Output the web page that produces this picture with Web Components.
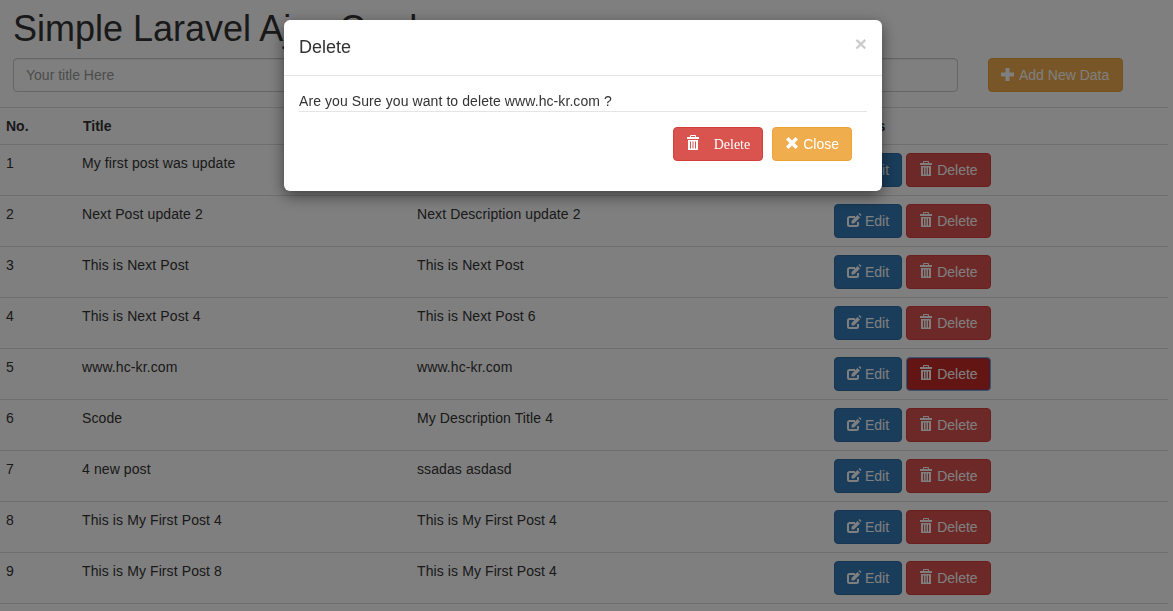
<!DOCTYPE html>
<html lang="en">
<head>
<meta charset="utf-8">
<title>Simple Laravel Ajax Crud</title>
<style>
html,body{margin:0;padding:0;background:#fff;color:#333;font:14px/20px "Liberation Sans",Arial,sans-serif;overflow:hidden;height:611px}
</style>
</head>
<body>
<x-page>
  <x-head slot="head" heading="Simple Laravel Ajax Crud"></x-head>
  <x-table>
    <x-row head no="No." name="Title" desc="Description" act="Actions"></x-row>
    <x-row no="1" name="My first post was update"></x-row>
    <x-row no="2" name="Next Post update 2" desc="Next Description update 2"></x-row>
    <x-row no="3" name="This is Next Post" desc="This is Next Post"></x-row>
    <x-row no="4" name="This is Next Post 4" desc="This is Next Post 6"></x-row>
    <x-row no="5" name="www.hc-kr.com" desc="www.hc-kr.com" focused></x-row>
    <x-row no="6" name="Scode" desc="My Description Title 4"></x-row>
    <x-row no="7" name="4 new post" desc="ssadas asdasd"></x-row>
    <x-row no="8" name="This is My First Post 4" desc="This is My First Post 4"></x-row>
    <x-row no="9" name="This is My First Post 8" desc="This is My First Post 4"></x-row>
  </x-table>
</x-page>
<x-modal heading="Delete">
  Are you Sure you want to delete www.hc-kr.com ?
</x-modal>
<script>
const ICONS = {
  trash: '<path fill-rule="evenodd" d="M5-1h4a1 1 0 0 1 1 1v1h3v2H1V1h3V0a1 1 0 0 1 1-1zM5 0v1h4V0zM2 4h10v10H2zM4 5.500v7h1v-7zM6.500 5.500v7h1v-7zM9 5.500v7h1v-7z"/>',
  edit: '<path fill="none" stroke="currentColor" stroke-width="2" d="M8 4H2.500A1.500 1.500 0 0 0 1 5.500v6A1.500 1.500 0 0 0 2.500 13h7A1.500 1.500 0 0 0 11 11.500V9"/><path d="M4.500 10.500v-2.500L10.500 2l2.500 2.500-6 6zM11.500 1l1-1 2 2-1 1z"/>',
  plus: '<path d="M4.500 1h4v4.500H13v4H8.500V14h-4V9.500H0v-4h4.500z"/>',
  remove: '<path d="M3.500 1 7 4.500 10.500 1 13 3.500 9.500 7 13 10.500 10.500 13 7 9.500 3.500 13 1 10.500 4.500 7 1 3.500z"/>'
};
class XIcon extends HTMLElement {
  connectedCallback(){
    if(this.shadowRoot) return;
    this.attachShadow({mode:'open'}).innerHTML =
      `<style>:host{display:block;width:14px;height:14px;flex:none}svg{display:block;width:14px;height:14px;fill:currentColor;overflow:visible}</style>
       <svg viewBox="0 0 14 14" aria-hidden="true">${ICONS[this.getAttribute('name')]||''}</svg>`;
  }
}
customElements.define('x-icon', XIcon);

const BTN = {
  primary:['#337ab7','#2e6da4'], danger:['#d9534f','#d43f3a'],
  warning:['#f0ad4e','#eea236'], focus:['#c62a28','#7aa6e0']
};
class XBtn extends HTMLElement {
  connectedCallback(){
    if(this.shadowRoot) return;
    const [bg,bd] = BTN[this.getAttribute('kind')]||BTN.primary;
    this.attachShadow({mode:'open'}).innerHTML =
      `<style>
        :host{display:block;flex:none}
        button{display:flex;align-items:center;height:34px;box-sizing:border-box;margin:0;padding:0 12px;
          border:1px solid ${bd};border-radius:4px;background:${bg};color:#fff;font:14px/20px "Liberation Sans",Arial,sans-serif;cursor:pointer}
        :host([kind=focus]) button{box-shadow:inset 0 0 0 1px #8e3a5c}
        :host([icon=plus]) button{padding-right:13px}
        :host([serif]) button{font-family:"Liberation Serif","Times New Roman",serif}
        x-icon{margin:-2px 4px 0 0}
        :host([serif]) x-icon{margin-right:14px}
        :host([serif]) .t{margin-top:1px}
      </style>
      <button type="button"><x-icon name="${this.getAttribute('icon')}"></x-icon><span class="t"><slot></slot></span></button>`;
  }
}
customElements.define('x-btn', XBtn);

class XPage extends HTMLElement {
  constructor(){
    super();
    this.attachShadow({mode:'open'}).innerHTML =
      `<style>:host{display:block;width:1168px}</style><slot name="head"></slot><slot></slot>`;
  }
}
customElements.define('x-page', XPage);

class XHead extends HTMLElement {
  connectedCallback(){
    if(this.shadowRoot) return;
    this.attachShadow({mode:'open'}).innerHTML =
      `<style>
        :host{display:block;padding:9px 0 15px 13px}
        h1{margin:0 0 9px;font:500 36px/39.600px "Liberation Sans",Arial,sans-serif;color:#333}
        .row{display:flex;gap:30px;align-items:flex-start}
        input{box-sizing:border-box;flex:0 0 945px;height:34px;padding:6px 12px;border:1px solid #ccc;border-radius:4px;
          font:14px/20px "Liberation Sans",Arial,sans-serif;color:#555;background:#fff;margin:0;outline:0;
          box-shadow:inset 0 1px 1px rgba(0,0,0,.075)}
        input::placeholder{color:#999;opacity:1}
      </style>
      <h1>${this.getAttribute('heading')}</h1>
      <div class="row"><input type="text" placeholder="Your title Here"><x-btn kind="warning" icon="plus">Add New Data</x-btn></div>`;
  }
}
customElements.define('x-head', XHead);

class XTable extends HTMLElement {
  constructor(){
    super();
    this.attachShadow({mode:'open'}).innerHTML =
      `<style>:host{display:block;border-top:1px solid #ddd}</style><slot></slot>`;
  }
}
customElements.define('x-table', XTable);

class XRow extends HTMLElement {
  connectedCallback(){
    if(this.shadowRoot) return;
    const a = n => this.getAttribute(n)||'';
    const head = this.hasAttribute('head');
    const focused = this.hasAttribute('focused');
    const kind = focused ? 'focus' : 'danger';
    const last = head
      ? `<div>${a('act')}</div>`
      : `<div class="acts"><x-btn kind="primary" icon="edit">Edit</x-btn><x-btn kind="${kind}" icon="trash">Delete</x-btn></div>`;
    this.attachShadow({mode:'open'}).innerHTML =
      `<style>
        :host{display:grid;grid-template-columns:76px 335px 417px 340px;border-bottom:1px solid #ddd;letter-spacing:.1px}
        :host([head]){font-weight:700;letter-spacing:0}
        :host([head]) .name{padding-left:7px}
        div{padding:8px 6px;min-width:0}
        .acts{display:flex;gap:4px;letter-spacing:0}
      </style>
      <div>${a('no')}</div><div class="name">${a('name')}</div><div>${a('desc')}</div>${last}`;
  }
}
customElements.define('x-row', XRow);

class XModal extends HTMLElement {
  constructor(){
    super();
    this.attachShadow({mode:'open'}).innerHTML =
      `<style>
        :host{display:block;position:fixed;inset:0;z-index:10}
        .backdrop{position:absolute;inset:0;background:rgba(0,0,0,.5)}
        .dialog{position:absolute;left:284px;top:20px;width:598px;background:#fff;border-radius:6px;
          box-shadow:0 5px 15px rgba(0,0,0,.5);color:#333}
        header{display:flex;justify-content:space-between;align-items:flex-start;padding:15px;border-bottom:1px solid #e5e5e5;height:25px}
        h4{margin:0;font:500 18px/25.700px "Liberation Sans",Arial,sans-serif}
        .close{font:700 21px/21px "Liberation Sans",Arial,sans-serif;color:#000;opacity:.2;margin-top:-2px}
        .body{padding:15px}
        p{margin:0;line-height:20px;border-bottom:1px solid #e5e5e5;letter-spacing:.085px}
        footer{display:flex;justify-content:flex-end;gap:9px;padding:15px}
      </style>
      <div class="backdrop"></div>
      <section class="dialog">
        <header><h4>${this.getAttribute('heading')}</h4><span class="close">×</span></header>
        <div class="body">
          <p><slot></slot></p>
          <footer>
            <x-btn kind="danger" icon="trash" serif>Delete</x-btn>
            <x-btn kind="warning" icon="remove">Close</x-btn>
          </footer>
        </div>
      </section>`;
  }
}
customElements.define('x-modal', XModal);
</script>
</body>
</html>
